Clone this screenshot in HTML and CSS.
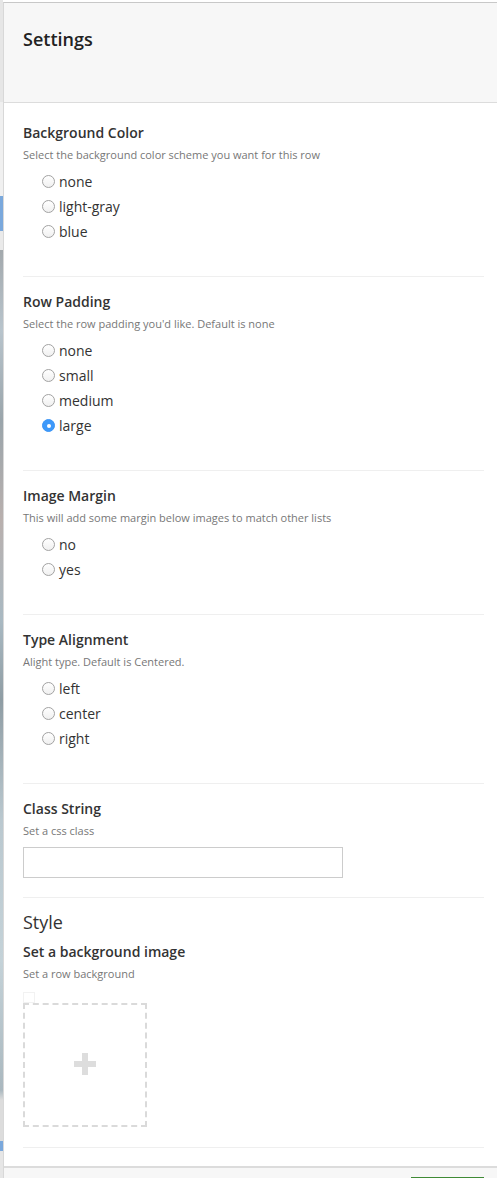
FILE: index.html
```html
<!DOCTYPE html>
<html>
<head>
<meta charset="utf-8">
<link rel="stylesheet" href="styles.css">
</head>
<body>
<div class="backdrop"></div>
<div class="panel">
  <div class="header"><h1 class="title">Settings</h1></div>
  <div class="content">
    <div class="section">
      <div class="label">Background Color</div>
      <div class="desc">Select the background color scheme you want for this row</div>
      <div class="radios">
        <div class="radio"><span class="dot"></span>none</div>
        <div class="radio"><span class="dot"></span>light-gray</div>
        <div class="radio"><span class="dot"></span>blue</div>
      </div>
    </div>
    <div class="section">
      <div class="label">Row Padding</div>
      <div class="desc">Select the row padding you'd like. Default is none</div>
      <div class="radios">
        <div class="radio"><span class="dot"></span>none</div>
        <div class="radio"><span class="dot"></span>small</div>
        <div class="radio"><span class="dot"></span>medium</div>
        <div class="radio"><span class="dot checked"></span>large</div>
      </div>
    </div>
    <div class="section">
      <div class="label">Image Margin</div>
      <div class="desc">This will add some margin below images to match other lists</div>
      <div class="radios">
        <div class="radio"><span class="dot"></span>no</div>
        <div class="radio"><span class="dot"></span>yes</div>
      </div>
    </div>
    <div class="section">
      <div class="label">Type Alignment</div>
      <div class="desc">Alight type. Default is Centered.</div>
      <div class="radios">
        <div class="radio"><span class="dot"></span>left</div>
        <div class="radio"><span class="dot"></span>center</div>
        <div class="radio"><span class="dot"></span>right</div>
      </div>
    </div>
    <div class="section section-field">
      <div class="label">Class String</div>
      <div class="desc">Set a css class</div>
      <input class="text-input" type="text">
    </div>
    <div class="section">
      <div class="group-title">Style</div>
      <div class="label label-spaced">Set a background image</div>
      <div class="desc">Set a row background</div>
      <div class="handle"></div>
      <div class="dropzone">
        <svg class="plus" width="22" height="22" viewBox="0 0 22 22"><rect x="8" y="0" width="6" height="22" fill="#dddddd"/><rect x="0" y="8" width="22" height="6" fill="#dddddd"/></svg>
      </div>
    </div>
  </div>
  <div class="footer"><div class="save-btn"></div></div>
</div>
</body>
</html>
```

FILE: styles.css
```css
html, body {
  margin: 0;
  padding: 0;
  height: 100%;
  overflow: hidden;
}
body {
  display: flex;
  font-family: "Open Sans", "Noto Sans", sans-serif;
  color: #333;
  background: #fff;
}
.backdrop {
  width: 3px;
  flex: none;
  background: linear-gradient(to bottom,
    #e6e6e6 0px, #e6e6e6 102px,
    #f0f0f0 102px, #f0f0f0 196px,
    #7aa8dc 196px, #7aa8dc 231px,
    #eaeaea 231px, #eaeaea 250px,
    #a3a9ad 250px, #b8c4cc 330px, #9aa5ab 420px, #b9b0ae 520px,
    #a9b9c2 620px, #8f9da4 700px, #bac8cf 820px, #c4d2d8 960px,
    #aab8bf 1090px, #dcdcdc 1100px, #dcdcdc 1141px,
    #7aa8dc 1141px, #7aa8dc 1151px, #e6e6e6 1151px);
}
.panel {
  flex: 1;
  display: flex;
  flex-direction: column;
  border-left: 1px solid #d8d8d8;
  margin-top: 2px;
  border-top: 1px solid #c8c8c8;
  min-width: 0;
}
.header {
  background: #f7f7f7;
  border-bottom: 1px solid #dcdcdc;
  padding: 24px 0 0 19px;
  box-sizing: border-box;
  height: 100px;
}
.title {
  margin: 0;
  font-size: 18px;
  line-height: 24px;
  font-weight: 600;
  color: #222;
}
.content {
  padding: 4px 13px 18px 19px;
}
.section {
  padding: 15px 0 20px;
  border-bottom: 1px solid #efefef;
}
.section:first-child {
  padding-top: 16px;
}
.section-field {
  padding-bottom: 19px;
}
.label {
  font-size: 14px;
  line-height: 20px;
  font-weight: 600;
  color: #333;
}
.label-spaced {
  margin-top: 11px;
}
.desc {
  margin-top: 4px;
  font-size: 11px;
  line-height: 16px;
  color: #777;
}
.radios {
  margin: 6px 0 12px 19px;
}
.radio {
  display: flex;
  align-items: center;
  height: 25px;
  font-size: 14px;
  color: #333;
}
.dot {
  width: 13px;
  height: 13px;
  box-sizing: border-box;
  border: 1px solid #a2a2a2;
  border-radius: 50%;
  background: linear-gradient(#ffffff, #f0f0f0);
  margin-right: 4px;
  position: relative;
}
.dot.checked {
  border-color: #3b95f6;
  background: #3d99fa;
}
.dot.checked::after {
  content: "";
  position: absolute;
  left: 3.5px;
  top: 3.5px;
  width: 4px;
  height: 4px;
  border-radius: 50%;
  background: #fff;
}
.text-input {
  display: block;
  margin-top: 8px;
  width: 320px;
  height: 31px;
  box-sizing: border-box;
  border: 1px solid #cccccc;
  padding: 0 6px;
  font-family: inherit;
  font-size: 14px;
  outline: none;
}
.group-title {
  font-size: 18px;
  line-height: 18px;
  font-weight: 400;
  color: #333;
}
.handle {
  margin-top: 10px;
  width: 12px;
  height: 11px;
  box-sizing: border-box;
  border: 1px solid #f2f2f2;
}
.dropzone {
  width: 124px;
  height: 124px;
  box-sizing: border-box;
  border: 2px dashed #dadada;
  display: flex;
  align-items: center;
  justify-content: center;
}
.plus {
  display: block;
  margin-bottom: 2px;
}
.footer {
  flex: 1;
  background: #f7f7f7;
  border-top: 2px solid #dcdcdc;
  position: relative;
}
.save-btn {
  position: absolute;
  left: 407px;
  top: 9px;
  width: 73px;
  height: 30px;
  background: #4c9141;
  border-top: 1px solid #3f8a35;
}
```
